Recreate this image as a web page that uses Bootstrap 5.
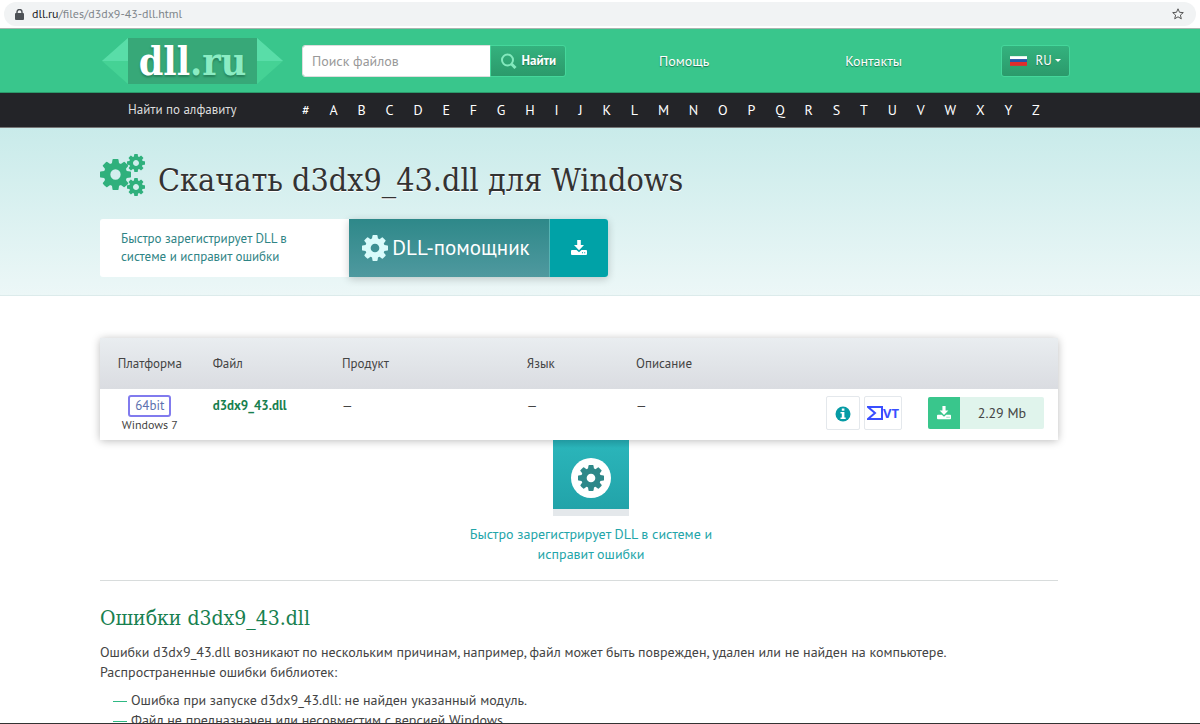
<!DOCTYPE html>
<html lang="ru">
<head>
<meta charset="utf-8">
<meta name="viewport" content="width=device-width, initial-scale=1">
<title>Скачать d3dx9_43.dll для Windows</title>
<link href="https://cdn.jsdelivr.net/npm/bootstrap@5.3.0/dist/css/bootstrap.min.css" rel="stylesheet">
<style>
body{font-family:"PT Sans","Noto Sans",sans-serif;font-size:14px;line-height:20px;color:#444;background:#fff}
a{text-decoration:none}
.slab{font-family:"DejaVu Serif Condensed","DejaVu Serif",serif;font-stretch:condensed}
.wrap{padding-left:100px;padding-right:142px}
.address{height:29px;padding:2px 4px;border-bottom:1px solid #a9b5af}
.address-field{background:#f1f3f4;border-radius:12px;color:#80868b;font-size:12px;line-height:24px;padding:0 12px 0 11px}
.address-field b{color:#202124;font-weight:400}
.viewport{border-bottom:1px solid #333}
.topbar{background:#39c68c;height:64px;border-bottom:1px solid #2b9a6b}
.topbar-in{display:grid;grid-template-columns:202px 264px 1fr 69px;padding-left:100px;padding-right:130px;align-items:center}
.logo{height:46px;width:184px}
.logo-box{background:#37a878;width:129px;color:#8becc3;font-size:39px;line-height:46px;font-weight:700;text-shadow:0 2px 2px #27835c}
.logo-box span{color:#fff}
.btn-green{background:linear-gradient(#34b27e,#2b9a6b);border:1px solid #45d79b;color:#fff;font-size:13px;line-height:20px;padding:5px 9px;border-radius:3px;text-shadow:0 1px 1px #1c7650}
.search-box{font-size:14px;height:32px;border:1px solid #ddd;border-radius:3px;padding:0 9px}
.search-box::placeholder{color:#999}
.main-menu{column-gap:136px;padding-right:6px}
.menu-link{color:#fff;text-shadow:0 1px 1px #1c7650}
.alphabet{background:#232428;height:35px;color:#fff;border-bottom:1px solid #777}
.alphabet a{color:#fff}
.alphabet-label{width:202px;padding-left:28px;color:#ddd;font-size:13px}
.alphabet-list{margin-right:18px}
.hero{background:linear-gradient(#c9ebea,#ecf7f7);height:168px;border-bottom:1px solid #dcebeb}
.hero-title{margin-bottom:19px}
.hero h1{font-size:32px;line-height:40px;color:#333;font-weight:400;text-shadow:0 1px 0 #fff}
.helper{width:508px;height:58px;border-radius:3px;background:#fff}
.helper-text{width:249px;padding-left:21px;font-size:13px;line-height:18px;color:#2f8485}
.helper-btn{background:linear-gradient(#2e8889,#4f999f);color:#fff;font-size:21px;width:201px;padding-right:6px;border-right:1px solid #55b5b5}
.helper-get{background:#00a2a7;width:58px;border-radius:0 3px 3px 0}
.helper-link{box-shadow:0 2px 8px #0003;border-radius:0 3px 3px 0}
.panel-files{box-shadow:0 1px 8px #0004;margin-top:42px;border-radius:3px}
.files{table-layout:fixed;width:100%;font-size:13px;color:#444}
.files th{background:linear-gradient(#e9edf0,#dadce1);height:51px;font-weight:400;padding:0 0 0 13px}
.files td{height:51px;padding:7px 0 0 13px;vertical-align:top;background:#fff}
.files .platform{padding-left:0;text-align:center}
.files td.platform{padding-top:6px}
.bits{border:2px solid #817bee;border-radius:3px;width:43px;line-height:18px;color:#5d71ae}
.os-name{line-height:16px;font-size:12px}
.file-link{color:#18804f;font-weight:700}
.tool-btn{border:1px solid #e4e8ec;border-radius:2px;background:#fff;height:34px;width:34px}
.vt{width:38px;color:#394eff;font:700 13px "Open Sans",sans-serif}
.size-btn{background:#e0f4ec;border-radius:2px;height:32px;width:116px;color:#444;font-size:14px;margin:1px 14px 0 22px}
.size-btn i{background:#39c68c;width:32px;border-radius:2px 0 0 2px}
.promo-row{padding-left:24px}
.promo-tile{width:76px;height:76px;background:linear-gradient(#2199a0,#2ab4b9 8px,#22a3a9);border-bottom:7px solid #e4e8eb}
.promo-tile span{width:40px;height:40px;background:#fff;margin-top:6px}
.promo{width:260px}
.promo a{color:#23a5a9}
.rule{border-top:1px solid #d8dcdc;margin:16px 0 0;opacity:1}
.article h2{font-size:21px;line-height:30px;color:#18804f;margin:22px 0 9px}
.causes li{padding-left:13px}
.causes li::before{content:"";display:inline-block;width:14px;height:1px;background:#2fb883;vertical-align:middle;margin-right:4px}
</style>
</head>
<body class="vh-100 d-flex flex-column overflow-hidden">
<svg class="d-none" xmlns="http://www.w3.org/2000/svg">
<symbol id="gear" viewBox="0 128 1536 1536"><path fill-rule="evenodd" d="M1024 896q0 106-75 181t-181 75-181-75-75-181 75-181 181-75 181 75 75 181zm512-109v222q0 12-8 23t-20 13l-185 28q-19 54-39 91 35 50 107 138 10 12 10 25t-9 23q-27 37-99 108t-94 71q-12 0-26-9l-138-108q-44 23-91 38-16 136-29 186-7 28-36 28h-222q-14 0-24.5-8.5t-11.5-21.5l-28-184q-49-16-90-37l-141 107q-10 9-25 9-14 0-25-11-126-114-165-168-7-10-7-23 0-12 8-23 15-21 51-66.5t54-70.5q-27-50-41-99l-183-27q-13-2-21-12.5t-8-23.5v-222q0-12 8-23t19-13l186-28q14-46 39-92-40-57-107-138-10-12-10-24 0-10 9-23 26-36 98.5-107.5t94.5-71.5q13 0 26 10l138 107q44-23 91-38 16-136 29-186 7-28 36-28h222q14 0 24.5 8.5t11.5 21.5l28 184q49 16 90 37l142-107q9-9 24-9 13 0 25 10 129 119 165 170 7 8 7 22 0 12-8 23-15 21-51 66.5t-54 70.5q26 50 41 98l183 28q13 2 21 12.5t8 23.5z"/></symbol>
<symbol id="get" viewBox="0 0 16 16"><path d="M6.200 0h3.600v5h3.200L8 10.300 3 5h3.200z"/><path fill-rule="evenodd" d="M1 10h4.500L8 12.300 10.500 10H15q1 0 1 1v3q0 1-1 1H1q-1 0-1-1v-3q0-1 1-1zm10 2.300v1h1v-1zm2.200 0v1h1v-1z"/></symbol>
</svg>
<div class="address">
<div class="address-field d-flex align-items-center">
<svg width="9" height="11" viewBox="0 0 9 11" class="me-2"><rect x="0" y="4" width="9" height="7" rx="1" fill="#4d5156"/><path d="M2 5V3a2.500 2.500 0 0 1 5 0v2" fill="none" stroke="#4d5156" stroke-width="1.400"/></svg>
<span><b>dll.ru</b>/files/d3dx9-43-dll.html</span>
<svg class="ms-auto" width="12" height="12" viewBox="0 0 12 12"><path d="M6 .8l1.500 3.500 3.800.3-2.900 2.500.9 3.700L6 8.800l-3.300 2 .9-3.700L.7 4.600l3.800-.3z" fill="none" stroke="#555"/></svg>
</div>
</div>
<div class="viewport flex-fill overflow-hidden">
<header>
<div class="topbar topbar-in">
<a href="#" class="logo d-flex">
<svg width="28" height="46" viewBox="0 0 28 46"><path d="M2 23L28 0v46z" fill="#45d295"/><path d="M2 23L28 0v23z" fill="#59dda8"/></svg>
<span class="logo-box slab text-center"><span>dll</span>.ru</span>
<svg width="27" height="46" viewBox="0 0 27 46"><path d="M26 23L0 0v46z" fill="#45d295"/><path d="M26 23L0 0v23z" fill="#59dda8"/></svg>
</a>
<form class="input-group flex-nowrap">
<input class="form-control search-box" type="search" placeholder="Поиск файлов" aria-label="Поиск файлов">
<button class="btn btn-green fw-bold d-flex align-items-center gap-1" type="button"><svg width="17" height="16" viewBox="0 0 16 16" fill="none" stroke="#83e9bd" stroke-width="2"><circle cx="7" cy="7" r="5.500"/><path d="M11 11l4 4" stroke-width="3"/></svg>Найти</button>
</form>
<nav class="main-menu d-flex justify-content-center">
<a class="menu-link" href="#">Помощь</a><a class="menu-link" href="#">Контакты</a>
</nav>
<button class="btn btn-green d-flex align-items-center dropdown-toggle px-2" type="button"><svg width="18" height="10" viewBox="0 0 18 10" class="me-2"><path fill="#fff" d="M0 0h18v4H0z"/><path fill="#2455a8" d="M0 3h18v4H0z"/><path fill="#e02c2c" d="M0 6h18v4H0z"/></svg>RU</button>
</div>
<nav class="alphabet wrap d-flex align-items-center">
<span class="alphabet-label flex-shrink-0">Найти по алфавиту</span>
<div class="alphabet-list d-flex flex-fill justify-content-between"><a href="#">#</a><a href="#">A</a><a href="#">B</a><a href="#">C</a><a href="#">D</a><a href="#">E</a><a href="#">F</a><a href="#">G</a><a href="#">H</a><a href="#">I</a><a href="#">J</a><a href="#">K</a><a href="#">L</a><a href="#">M</a><a href="#">N</a><a href="#">O</a><a href="#">P</a><a href="#">Q</a><a href="#">R</a><a href="#">S</a><a href="#">T</a><a href="#">U</a><a href="#">V</a><a href="#">W</a><a href="#">X</a><a href="#">Y</a><a href="#">Z</a></div>
</nav>
</header>
<section class="hero wrap pt-4">
<div class="hero-title d-flex">
<svg width="46" height="44" viewBox="0 0 46 44" fill="#2fb07c" class="me-2 flex-shrink-0"><use href="#gear" y="7" width="31" height="31"/><use href="#gear" x="27" y="2" width="18" height="18"/><use href="#gear" x="27" y="26" width="18" height="18"/></svg>
<h1 class="slab mb-0 mt-2 ms-1 text-nowrap">Скачать d3dx9_43.dll для Windows</h1>
</div>
<div class="helper d-flex">
<div class="helper-text d-flex align-items-center"><span>Быстро зарегистрирует DLL в<br>системе и исправит ошибки</span></div>
<a href="#" class="helper-link d-flex">
<span class="helper-btn d-flex align-items-center justify-content-center gap-1 text-nowrap"><svg width="26" height="26" fill="#d9fbfb"><use href="#gear"/></svg>DLL-помощник</span>
<span class="helper-get d-flex align-items-center justify-content-center"><svg width="16" height="16" fill="#fff"><use href="#get"/></svg></span>
</a>
</div>
</section>
<main class="wrap">
<div class="panel-files">
<table class="files">
<colgroup><col style="width:10.4%"><col style="width:13.5%"><col style="width:19.3%"><col style="width:11.4%"><col><col style="width:26%"></colgroup>
<thead><tr><th class="platform">Платформа</th><th>Файл</th><th>Продукт</th><th>Язык</th><th>Описание</th><th aria-label="Действия"></th></tr></thead>
<tbody><tr>
<td class="platform"><div class="bits mx-auto">64bit</div><div class="os-name text-nowrap">Windows 7</div></td>
<td><a class="file-link" href="#">d3dx9_43.dll</a></td><td>—</td><td>—</td><td>—</td>
<td><div class="d-flex gap-1">
<button class="tool-btn ms-auto p-0" type="button" aria-label="Информация"><svg width="16" height="16" viewBox="0 0 16 16"><circle cx="8" cy="8" r="7.500" fill="#069ba5"/><path d="M6.800 2.500h2.600v2.200H6.800zM5.500 6h3.900v5.500h1.300V13H5.500v-1.500h1.300v-4H5.500z" fill="#fff"/></svg></button>
<button class="tool-btn vt p-0 d-flex align-items-center justify-content-center" type="button"><svg width="16" height="16" viewBox="0 0 16 16" fill="none" stroke="#394eff" stroke-width="2"><path d="M1 2h14v12H1l7-6z"/></svg>VT</button>
<a class="size-btn d-flex align-items-center" href="#"><i class="align-self-stretch d-flex align-items-center justify-content-center"><svg width="14" height="14" fill="#fff"><use href="#get"/></svg></i><span class="flex-fill text-center">2.29 Mb</span></a>
</div></td>
</tr></tbody>
</table>
</div>
<div class="promo-row">
<div class="promo mx-auto text-center">
<div class="promo-tile mx-auto d-flex align-items-center justify-content-center"><span class="rounded-circle d-flex align-items-center justify-content-center"><svg width="26" height="26" fill="#2e8889"><use href="#gear"/></svg></span></div>
<a href="#" class="d-block pt-2">Быстро зарегистрирует DLL в системе и исправит ошибки</a>
</div>
</div>
<hr class="rule">
<article class="article">
<h2 class="slab">Ошибки d3dx9_43.dll</h2>
<p class="mb-2">Ошибки d3dx9_43.dll возникают по нескольким причинам, например, файл может быть поврежден, удален или не найден на компьютере. Распространенные ошибки библиотек:</p>
<ul class="causes list-unstyled"><li>Ошибка при запуске d3dx9_43.dll: не найден указанный модуль.</li><li>Файл не предназначен или несовместим с версией Windows.</li></ul>
</article>
</main>
</div>
<script src="https://cdn.jsdelivr.net/npm/bootstrap@5.3.0/dist/js/bootstrap.bundle.min.js"></script>
</body>
</html>
